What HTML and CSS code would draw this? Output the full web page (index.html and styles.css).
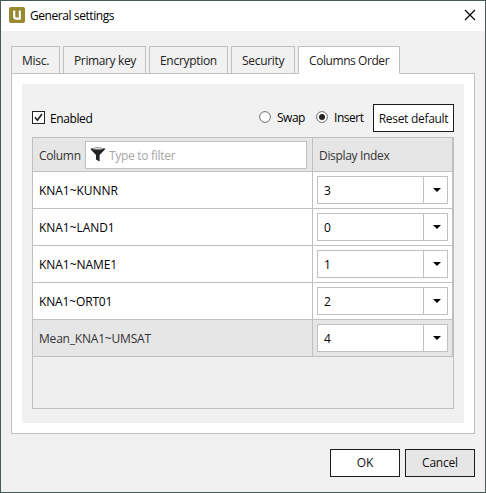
FILE: index.html
```html
<!DOCTYPE html>
<html lang="en">
<head>
<meta charset="utf-8">
<title>General settings</title>
<link rel="stylesheet" href="styles.css">
</head>
<body>
<div class="window">
  <header class="titlebar">
    <svg class="logo" width="16" height="16" viewBox="0 0 16 16"><rect width="16" height="16" rx="2" fill="#988830"/><path d="M4 3.5h1.5v7.6h4.9V3.5" fill="none" stroke="#6f6424" stroke-width="1"/><path d="M5.2 3.4v6.2q0 2 2 2h3.6V3.4" fill="none" stroke="#fff" stroke-width="2.2"/></svg>
    <h1 class="title">General settings</h1>
    <svg class="close" width="12" height="12" viewBox="0 0 12 12"><path d="M1 1l10 10M11 1L1 11" stroke="#000" stroke-width="1.15"/></svg>
  </header>
  <nav class="tabs">
    <div class="tab tab-misc">Misc.</div>
    <div class="tab tab-key">Primary key</div>
    <div class="tab tab-encryption">Encryption</div>
    <div class="tab tab-security">Security</div>
    <div class="tab tab-columns active">Columns Order</div>
  </nav>
  <main class="panel">
    <div class="content">
      <div class="toolbar">
        <label class="enabled"><svg width="13" height="13" viewBox="0 0 13 13"><rect x=".5" y=".5" width="12" height="12" fill="#fff" stroke="#222"/><path d="M3 6.2l2.4 3L10 3" fill="none" stroke="#222" stroke-width="1.7"/></svg>Enabled</label>
        <label class="radio swap"><svg width="12" height="12" viewBox="0 0 12 12"><circle cx="6" cy="6" r="5.4" fill="#fff" stroke="#707070"/></svg>Swap</label>
        <label class="radio insert"><svg width="12" height="12" viewBox="0 0 12 12"><circle cx="6" cy="6" r="5.4" fill="#fff" stroke="#707070"/><circle cx="6" cy="6" r="3" fill="#222"/></svg>Insert</label>
        <button class="button reset">Reset default</button>
      </div>
      <div class="grid">
        <div class="row head">
          <div class="cell name"><span class="label">Column</span>
            <div class="filter"><svg width="16" height="15" viewBox="0 0 16 15"><path d="M.5 2.2L6 8v4.6l3.6 2V8l5.6-5.8z" fill="#222"/><ellipse cx="7.9" cy="2.1" rx="7.3" ry="1.6" fill="#222"/><ellipse cx="7.9" cy="1.8" rx="6" ry=".8" fill="#d8d8d8"/></svg><span>Type to filter</span></div>
          </div>
          <div class="cell index">Display Index</div>
        </div>
        <div class="row"><div class="cell name">KNA1~KUNNR</div><div class="cell index"><div class="combo"><span>3</span><i><svg width="8" height="4" viewBox="0 0 8 4"><path d="M0 0h8L4 4z"/></svg></i></div></div></div>
        <div class="row"><div class="cell name">KNA1~LAND1</div><div class="cell index"><div class="combo"><span>0</span><i><svg width="8" height="4" viewBox="0 0 8 4"><path d="M0 0h8L4 4z"/></svg></i></div></div></div>
        <div class="row"><div class="cell name">KNA1~NAME1</div><div class="cell index"><div class="combo"><span>1</span><i><svg width="8" height="4" viewBox="0 0 8 4"><path d="M0 0h8L4 4z"/></svg></i></div></div></div>
        <div class="row"><div class="cell name ort">KNA1~ORT01</div><div class="cell index"><div class="combo"><span>2</span><i><svg width="8" height="4" viewBox="0 0 8 4"><path d="M0 0h8L4 4z"/></svg></i></div></div></div>
        <div class="row selected"><div class="cell name">Mean_KNA1~UMSAT</div><div class="cell index"><div class="combo"><span>4</span><i><svg width="8" height="4" viewBox="0 0 8 4"><path d="M0 0h8L4 4z"/></svg></i></div></div></div>
      </div>
    </div>
  </main>
  <footer class="actions">
    <button class="button ok">OK</button>
    <button class="button cancel">Cancel</button>
  </footer>
</div>
</body>
</html>
```
FILE: styles.css
```css
* { box-sizing: border-box; }
body { margin: 0; font: 12px/16px "Open Sans", "Noto Sans", sans-serif; letter-spacing: -0.3px; color: #222; }
svg { display: block; flex: none; }
.window { width: 486px; height: 493px; border: 1px solid #465b59; background: #f1f1f1; display: flex; flex-direction: column; }

.titlebar { height: 30px; flex: none; background: #fff; display: flex; align-items: center; padding: 0 9px 2px 8px; }
.title { margin: 2px auto 0 5px; font-size: 12px; line-height: 16px; font-weight: 400; letter-spacing: -0.43px; color: #000; }

.tabs { height: 43px; flex: none; padding: 15px 10px 0; display: flex; gap: 3px; margin-bottom: -1px; z-index: 1; }
.tab { height: 28px; border: 1px solid #c0c0c0; background: #f1f1f1; padding: 6px 0 0 10px; white-space: nowrap; }
.tab.active { background: #fff; border-bottom-color: #fff; }
.tab-misc { width: 49px; letter-spacing: -0.25px; }
.tab-key { width: 83px; letter-spacing: -0.37px; }
.tab-encryption { width: 79px; }
.tab-security { width: 64px; letter-spacing: -0.3px; }
.tab-columns { width: 102px; letter-spacing: -0.43px; }

.panel { height: 361px; flex: none; margin: 0 10px; border: 1px solid #c0c0c0; background: #fff; padding: 10px; }
.content { height: 339px; background: #f1f1f1; padding: 20px 10px 15px; }
.toolbar { height: 28px; display: flex; }
.enabled { display: flex; gap: 5px; padding-top: 7px; margin-right: auto; color: #000; letter-spacing: -0.4px; }
.radio { display: flex; gap: 6px; padding-top: 6px; color: #000; }
.radio svg { margin-top: 1px; }
.swap { width: 57px; letter-spacing: -0.5px; }
.insert { width: 57px; letter-spacing: -0.45px; }

.button { font: inherit; letter-spacing: inherit; color: #111; background: #fff; border: 1px solid #1c1c1c; padding: 0; height: 28px; }
.reset { width: 81px; padding-top: 1px; }

.grid { height: 272px; margin-top: 5px; border: 1px solid #c0c0c0; background: #efefef; }
.row { height: 37px; display: flex; background: #fff; border: solid #c0c0c0; border-width: 0 1px 1px 0; }
.head { height: 34px; background: #e6e6e6; color: #333; }
.selected { background: #e6e6e6; }
.cell { display: flex; align-items: center; }
.name { width: 280px; border-right: 1px solid #c0c0c0; padding: 2px 5px 0 6px; letter-spacing: -0.05px; color: #000; }
.ort { letter-spacing: -0.15px; }
.selected .name { letter-spacing: -0.2px; color: #333; }
.index { width: 139px; padding: 0 4px; }
.head .cell { letter-spacing: -0.33px; color: #333; }
.head .name { padding-top: 0; }
.head .index { padding: 3px 0 0 6px; }
.label { width: 46px; padding-top: 3px; }
.filter { width: 222px; height: 28px; border: 1px solid #c0c0c0; background: #fff; display: flex; align-items: center; gap: 3px; padding-left: 4px; color: #a6a6a6; letter-spacing: -0.3px; }
.filter span { padding-top: 2px; }
.combo { width: 131px; height: 28px; border: 1px solid #c0c0c0; background: #fff; display: flex; align-items: center; color: #000; }
.combo span { flex: 1; padding: 2px 0 0 6px; }
.combo i { width: 24px; height: 26px; border-left: 1px solid #c0c0c0; display: flex; align-items: center; justify-content: center; padding-left: 3px; }

.actions { margin: 15px 10px 0; display: flex; justify-content: flex-end; gap: 5px; }
.actions .button { width: 70px; }
.cancel { background: #e6e6e6; letter-spacing: -0.2px; }
.ok { letter-spacing: 0; }
```
